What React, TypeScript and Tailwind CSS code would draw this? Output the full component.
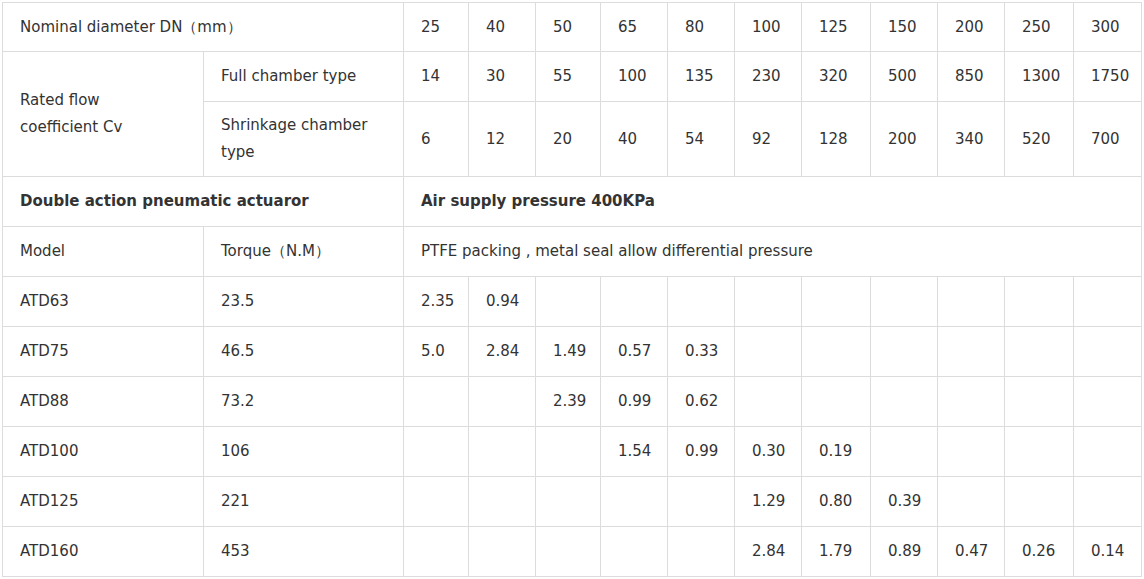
const DN = ['25', '40', '50', '65', '80', '100', '125', '150', '200', '250', '300']
const FULL = ['14', '30', '55', '100', '135', '230', '320', '500', '850', '1300', '1750']
const SHRINK = ['6', '12', '20', '40', '54', '92', '128', '200', '340', '520', '700']

const MODELS: { model: string; torque: string; values: string[] }[] = [
  { model: 'ATD63', torque: '23.5', values: ['2.35', '0.94', '', '', '', '', '', '', '', '', ''] },
  { model: 'ATD75', torque: '46.5', values: ['5.0', '2.84', '1.49', '0.57', '0.33', '', '', '', '', '', ''] },
  { model: 'ATD88', torque: '73.2', values: ['', '', '2.39', '0.99', '0.62', '', '', '', '', '', ''] },
  { model: 'ATD100', torque: '106', values: ['', '', '', '1.54', '0.99', '0.30', '0.19', '', '', '', ''] },
  { model: 'ATD125', torque: '221', values: ['', '', '', '', '', '1.29', '0.80', '0.39', '', '', ''] },
  { model: 'ATD160', torque: '453', values: ['', '', '', '', '', '2.84', '1.79', '0.89', '0.47', '0.26', '0.14'] },
]

const cell = 'border border-[#dcdcdc] px-[17px] align-middle text-left font-normal'

export default function App() {
  return (
    <div className="bg-white pl-[2px] pt-[2px]" style={{ fontFamily: '"DejaVu Sans", "Noto Sans", sans-serif' }}>
      <table className="w-[1140px] table-fixed border-collapse text-[15px] leading-[27px] text-[#333]">
        <colgroup>
          <col className="w-[201px]" />
          <col className="w-[200px]" />
          <col className="w-[65px]" />
          <col className="w-[67px]" />
          <col className="w-[65px]" />
          <col className="w-[67px]" />
          <col className="w-[67px]" />
          <col className="w-[67px]" />
          <col className="w-[69px]" />
          <col className="w-[67px]" />
          <col className="w-[67px]" />
          <col className="w-[69px]" />
          <col className="w-[68px]" />
        </colgroup>
        <tbody>
          <tr className="h-[49px]">
            <td colSpan={2} className={cell}>Nominal diameter DN（mm）</td>
            {DN.map((v) => (
              <td key={v} className={cell}>{v}</td>
            ))}
          </tr>
          <tr className="h-[50px]">
            <td rowSpan={2} className={cell}>
              Rated flow
              <br />
              coefficient Cv
            </td>
            <td className={cell}>Full chamber type</td>
            {FULL.map((v) => (
              <td key={v} className={cell}>{v}</td>
            ))}
          </tr>
          <tr className="h-[75px]">
            <td className={cell}>Shrinkage chamber type</td>
            {SHRINK.map((v) => (
              <td key={v} className={cell}>{v}</td>
            ))}
          </tr>
          <tr className="h-[50px]">
            <td colSpan={2} className={`${cell} !font-semibold`}>Double action pneumatic actuaror</td>
            <td colSpan={11} className={`${cell} !font-semibold`}>Air supply pressure 400KPa</td>
          </tr>
          <tr className="h-[50px]">
            <td className={cell}>Model</td>
            <td className={cell}>Torque（N.M）</td>
            <td colSpan={11} className={cell}>PTFE packing , metal seal allow differential pressure</td>
          </tr>
          {MODELS.map((row) => (
            <tr key={row.model} className="h-[50px]">
              <td className={cell}>{row.model}</td>
              <td className={cell}>{row.torque}</td>
              {row.values.map((v, i) => (
                <td key={i} className={cell}>{v}</td>
              ))}
            </tr>
          ))}
        </tbody>
      </table>
    </div>
  )
}
